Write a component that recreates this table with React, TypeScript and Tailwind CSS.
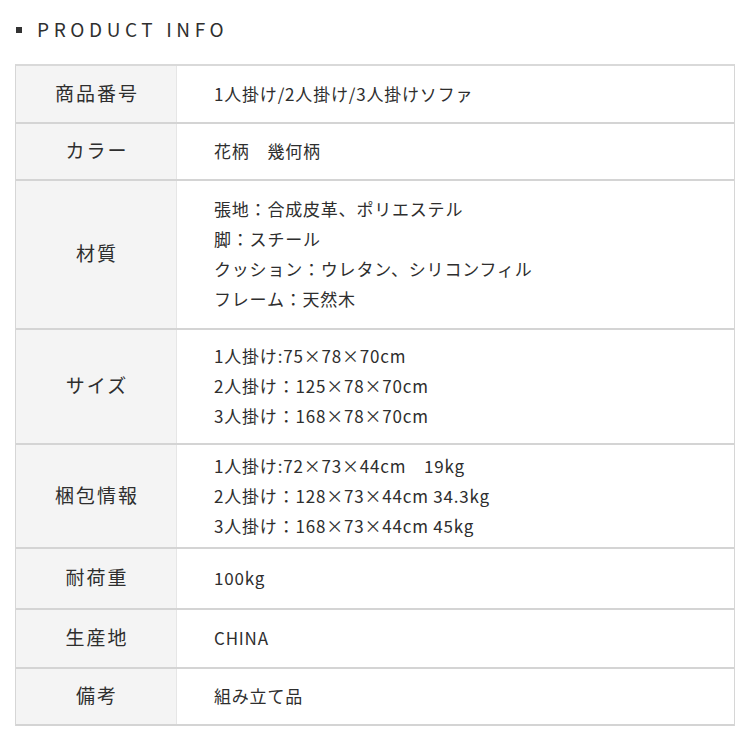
import React from 'react';

type Row = { label: string; lines: string[]; h: string };

const rows: Row[] = [
  { label: '商品番号', lines: ['1人掛け/2人掛け/3人掛けソファ'], h: 'h-[58px]' },
  { label: 'カラー', lines: ['花柄　幾何柄'], h: 'h-[57px]' },
  {
    label: '材質',
    lines: ['張地：合成皮革、ポリエステル', '脚：スチール', 'クッション：ウレタン、シリコンフィル', 'フレーム：天然木'],
    h: 'h-[149px]',
  },
  {
    label: 'サイズ',
    lines: ['1人掛け:75×78×70cm', '2人掛け：125×78×70cm', '3人掛け：168×78×70cm'],
    h: 'h-[115px]',
  },
  {
    label: '梱包情報',
    lines: ['1人掛け:72×73×44cm　19kg', '2人掛け：128×73×44cm 34.3kg', '3人掛け：168×73×44cm 45kg'],
    h: 'h-[104px]',
  },
  { label: '耐荷重', lines: ['100kg'], h: 'h-[61px]' },
  { label: '生産地', lines: ['CHINA'], h: 'h-[59px]' },
  { label: '備考', lines: ['組み立て品'], h: 'h-[57px]' },
];

const App: React.FC = () => {
  return (
    <div
      className="w-[750px] h-[750px] bg-white text-[#2e2e2e]"
      style={{ fontFamily: '"Noto Sans CJK JP", "Noto Sans", sans-serif' }}
    >
      <div className="flex items-center h-[60px] pl-[16px] pb-[1px]">
        <span className="w-[6px] h-[6px] bg-[#333333]" />
        <h1 className="ml-[15px] text-[19px] tracking-[4.6px] font-normal text-[#2f2f2f]">PRODUCT INFO</h1>
      </div>

      <div className="mt-[4px] mx-[15px] w-[720px] border-x border-[#d6d6d6] border-t-2 border-t-[#d9d9d9]">
        {rows.map((row) => (
          <div key={row.label} className={`flex ${row.h} border-b-2 border-[#d4d4d4]`}>
            <div className="w-[161px] shrink-0 flex items-center justify-center bg-[#f4f4f4] border-r border-[#e6e6e6] text-[19px] tracking-[2px] pl-[2px] pb-[2px]">
              {row.label}
            </div>
            <div className="flex flex-col justify-center pl-[37px] pb-[1px] text-[17px] leading-[30px] tracking-[0.8px]">
              {row.lines.map((line) => (
                <div key={line}>{line}</div>
              ))}
            </div>
          </div>
        ))}
      </div>
    </div>
  );
};

export default App;
